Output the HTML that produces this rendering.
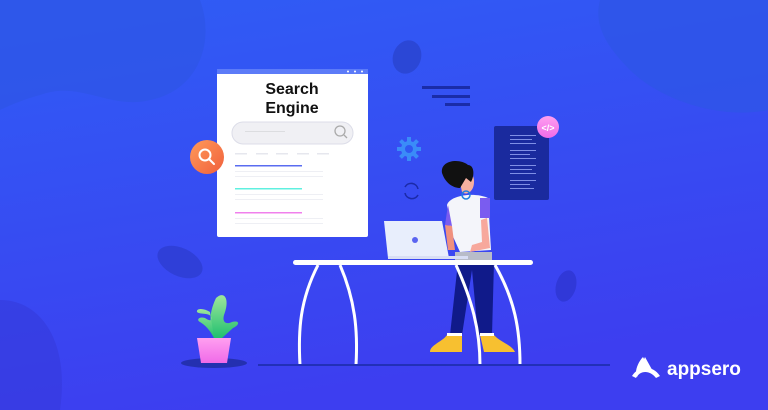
<!DOCTYPE html>
<html><head><meta charset="utf-8"><style>
html,body{margin:0;padding:0;width:768px;height:410px;overflow:hidden}
svg{display:block}
</style></head><body>
<svg width="768" height="410" viewBox="0 0 768 410" xmlns="http://www.w3.org/2000/svg" font-family="Liberation Sans, sans-serif">
<defs>
<linearGradient id="bg" x1="0" y1="0" x2="0.3" y2="1">
<stop offset="0" stop-color="#2f5df5"/><stop offset="1" stop-color="#3d3ef0"/></linearGradient>
<linearGradient id="or" x1="0" y1="0" x2="1" y2="1"><stop offset="0" stop-color="#ff9a5a"/><stop offset="1" stop-color="#f0603c"/></linearGradient>
<linearGradient id="pk" x1="0" y1="0" x2="0" y2="1"><stop offset="0" stop-color="#ff9ff0"/><stop offset="1" stop-color="#f06ae8"/></linearGradient>
<linearGradient id="lf" x1="0" y1="0" x2="0" y2="1"><stop offset="0" stop-color="#9ee69a"/><stop offset="1" stop-color="#20c070"/></linearGradient>
</defs>
<rect width="768" height="410" fill="url(#bg)"/>
<!-- blobs -->
<path d="M0 0 H200 C215 40 200 90 150 100 C110 110 80 80 40 95 C20 100 0 110 0 110Z" fill="#2d55e6" opacity=".7"/>
<path d="M600 0 H768 V110 C720 120 660 100 630 70 C600 40 595 20 600 0Z" fill="#2d55e6" opacity=".7"/>
<path d="M0 300 C40 300 70 340 60 410 H0Z" fill="#3437d8" opacity=".5"/>
<ellipse cx="407" cy="57" rx="14" ry="17" fill="#2b47d6" transform="rotate(20 407 57)"/>
<ellipse cx="180" cy="262" rx="24" ry="14" fill="#2f3fd8" transform="rotate(25 180 262)"/>
<ellipse cx="566" cy="286" rx="10" ry="16" fill="#3038d8" transform="rotate(15 566 286)"/>
<!-- lines top -->
<rect x="422" y="86" width="48" height="3" fill="#1a2ca8"/>
<rect x="432" y="95" width="38" height="3" fill="#1a2ca8"/>
<rect x="445" y="103" width="25" height="3" fill="#1a2ca8"/>
<!-- browser -->
<rect x="217" y="69" width="151" height="168" rx="2" fill="#ffffff"/>
<rect x="217" y="69" width="151" height="5" fill="#5c7bf8"/>
<circle cx="348" cy="71.5" r="1" fill="#fff"/><circle cx="355" cy="71.5" r="1" fill="#fff"/><circle cx="362" cy="71.5" r="1" fill="#fff"/>
<text x="292" y="94" font-size="16" font-weight="bold" text-anchor="middle" fill="#111">Search</text>
<text x="292" y="113" font-size="16" font-weight="bold" text-anchor="middle" fill="#111">Engine</text>
<rect x="232" y="122" width="121" height="22" rx="11" fill="#f0f0f4" stroke="#dcdde8"/>
<rect x="245" y="131" width="40" height="1" fill="#dcdde0"/>
<circle cx="340" cy="131" r="5" fill="none" stroke="#aaa" stroke-width="1.3"/><line x1="344" y1="135" x2="347" y2="138" stroke="#aaa" stroke-width="1.3"/>
<g fill="#e6e7ee"><rect x="235" y="153" width="12" height="1.5"/><rect x="256" y="153" width="12" height="1.5"/><rect x="276" y="153" width="12" height="1.5"/><rect x="297" y="153" width="12" height="1.5"/><rect x="317" y="153" width="12" height="1.5"/></g>
<rect x="235" y="165" width="67" height="1.5" fill="#5a6cf0"/>
<rect x="235" y="188" width="67" height="1.5" fill="#5ff0e0"/>
<rect x="235" y="212" width="67" height="1.5" fill="#f080ec"/>
<g fill="#eeeff4"><rect x="235" y="171" width="88" height="1"/><rect x="235" y="176" width="88" height="1"/><rect x="235" y="194" width="88" height="1"/><rect x="235" y="199" width="88" height="1"/><rect x="235" y="218" width="88" height="1"/><rect x="235" y="223" width="88" height="1"/></g>
<!-- orange search -->
<circle cx="207" cy="157" r="17" fill="url(#or)"/>
<circle cx="205" cy="155" r="5.5" fill="none" stroke="#fff" stroke-width="2"/><line x1="209" y1="159" x2="214" y2="164" stroke="#fff" stroke-width="2" stroke-linecap="round"/>
<!-- gear -->
<g transform="translate(409 149)" fill="#3a8cf8">
<circle r="8"/><g stroke="#3a8cf8" stroke-width="4"><line x1="0" y1="-12" x2="0" y2="12"/><line x1="-12" y1="0" x2="12" y2="0"/><line x1="-8.5" y1="-8.5" x2="8.5" y2="8.5"/><line x1="-8.5" y1="8.5" x2="8.5" y2="-8.5"/></g>
<circle r="4" fill="#2f58f2"/></g>
<!-- refresh -->
<path d="M405 187 A7 7 0 0 1 418 189 M418 195 A7 7 0 0 1 405 193" fill="none" stroke="#1b2aa8" stroke-width="1.6"/>
<!-- code panel -->
<rect x="494" y="126" width="55" height="74" rx="2" fill="#1a2a9e"/>
<g fill="#7f8fe6"><rect x="510" y="135" width="26" height="1"/><rect x="510" y="139" width="22" height="1"/><rect x="510" y="143" width="26" height="1"/>
<rect x="510" y="150" width="26" height="1"/><rect x="510" y="154" width="20" height="1"/><rect x="510" y="158" width="26" height="1"/>
<rect x="510" y="165" width="26" height="1"/><rect x="510" y="169" width="22" height="1"/><rect x="510" y="173" width="26" height="1"/>
<rect x="510" y="180" width="26" height="1"/><rect x="510" y="184" width="20" height="1"/><rect x="510" y="188" width="24" height="1"/></g>
<circle cx="548" cy="127" r="11" fill="url(#pk)"/>
<text x="548" y="131" font-size="9" fill="#fff" text-anchor="middle" font-weight="bold">&lt;/&gt;</text>
<!-- person -->
<path d="M458 262 L450 335 L462 335 L472 270 L478 335 L492 335 L494 262Z" fill="#101a8a"/>
<path d="M450 230 L447 205 C450 195 475 192 488 198 L491 250 L460 252Z" fill="#f4f5fa"/>
<path d="M455 252 L492 252 L492 262 L455 262Z" fill="#b8bcc8"/>
<path d="M480 198 L490 198 L490 218 L480 218Z" fill="#7a5cf0"/>
<path d="M448 205 L445 225 L452 226 Z" fill="#7a5cf0"/>
<path d="M487 218 L490 248 L470 252 L472 245 L482 242 L481 220Z" fill="#f7a89c"/>
<path d="M445 225 L448 250 L455 250 L452 226Z" fill="#f0907e"/>
<path d="M459 178 C460 170 475 170 474 182 C474 192 466 196 462 192Z" fill="#f7b0a0"/>
<path d="M442 173 C440 160 460 158 468 165 C474 165 475 175 471 182 L466 178 L460 188 C455 188 446 185 442 173Z" fill="#111"/>
<circle cx="466" cy="195" r="4" fill="none" stroke="#2080e0" stroke-width="1.5"/>
<path d="M447 335 L462 335 L462 352 L430 352 C430 345 442 342 447 335Z" fill="#f7c030"/>
<path d="M480 335 L494 335 C500 342 512 345 515 352 L484 352Z" fill="#f7c030"/>
<rect x="447" y="333" width="15" height="3" fill="#fff"/><rect x="480" y="333" width="14" height="3" fill="#fff"/>
<!-- laptop -->
<path d="M384 221 L442 221 L449 258 L388 258Z" fill="#e8eefc"/>
<circle cx="415" cy="240" r="3" fill="#5a64f0"/>
<rect x="388" y="256" width="80" height="3" fill="#d8def4"/>
<!-- table -->
<rect x="293" y="260" width="240" height="5" rx="2.5" fill="#fff"/>
<path d="M318 265 C300 300 298 330 300 365" fill="none" stroke="#fff" stroke-width="3"/>
<path d="M340 265 C355 300 358 330 356 365" fill="none" stroke="#fff" stroke-width="3"/>
<path d="M456 265 C472 300 480 330 480 365" fill="none" stroke="#fff" stroke-width="3"/>
<path d="M495 265 C515 300 520 330 520 365" fill="none" stroke="#fff" stroke-width="3"/>
<!-- ground line -->
<rect x="258" y="364" width="352" height="2" fill="#2230b8"/>
<!-- plant -->
<ellipse cx="214" cy="363" rx="33" ry="5" fill="#2430b0"/>
<path d="M214 338 C210 325 208 315 216 298 C225 290 230 300 224 315 C222 322 226 325 232 322 C240 320 240 325 233 328 L222 338Z" fill="url(#lf)"/>
<path d="M214 338 C210 330 205 325 200 322 C196 320 199 316 205 318 C208 320 212 322 212 318 C210 312 200 315 197 312 C196 308 204 308 210 312Z" fill="url(#lf)"/>
<path d="M197 338 L231 338 L227 363 L201 363Z" fill="url(#pk)"/>
<!-- logo -->
<g fill="#fff">
<path d="M643 357 L650 370 C646 368 640 371 637 377 C634 372 638 362 643 357Z"/>
<path d="M632 376 C638 366 652 364 660 376 L656 378 C650 370 640 370 636 378Z"/>
<path d="M645 357 L655 375 C650 369 645 367 640 368Z"/>
</g>
<text x="667" y="375" font-size="19" font-weight="bold" fill="#fff">appsero</text>
</svg>
</body></html>
